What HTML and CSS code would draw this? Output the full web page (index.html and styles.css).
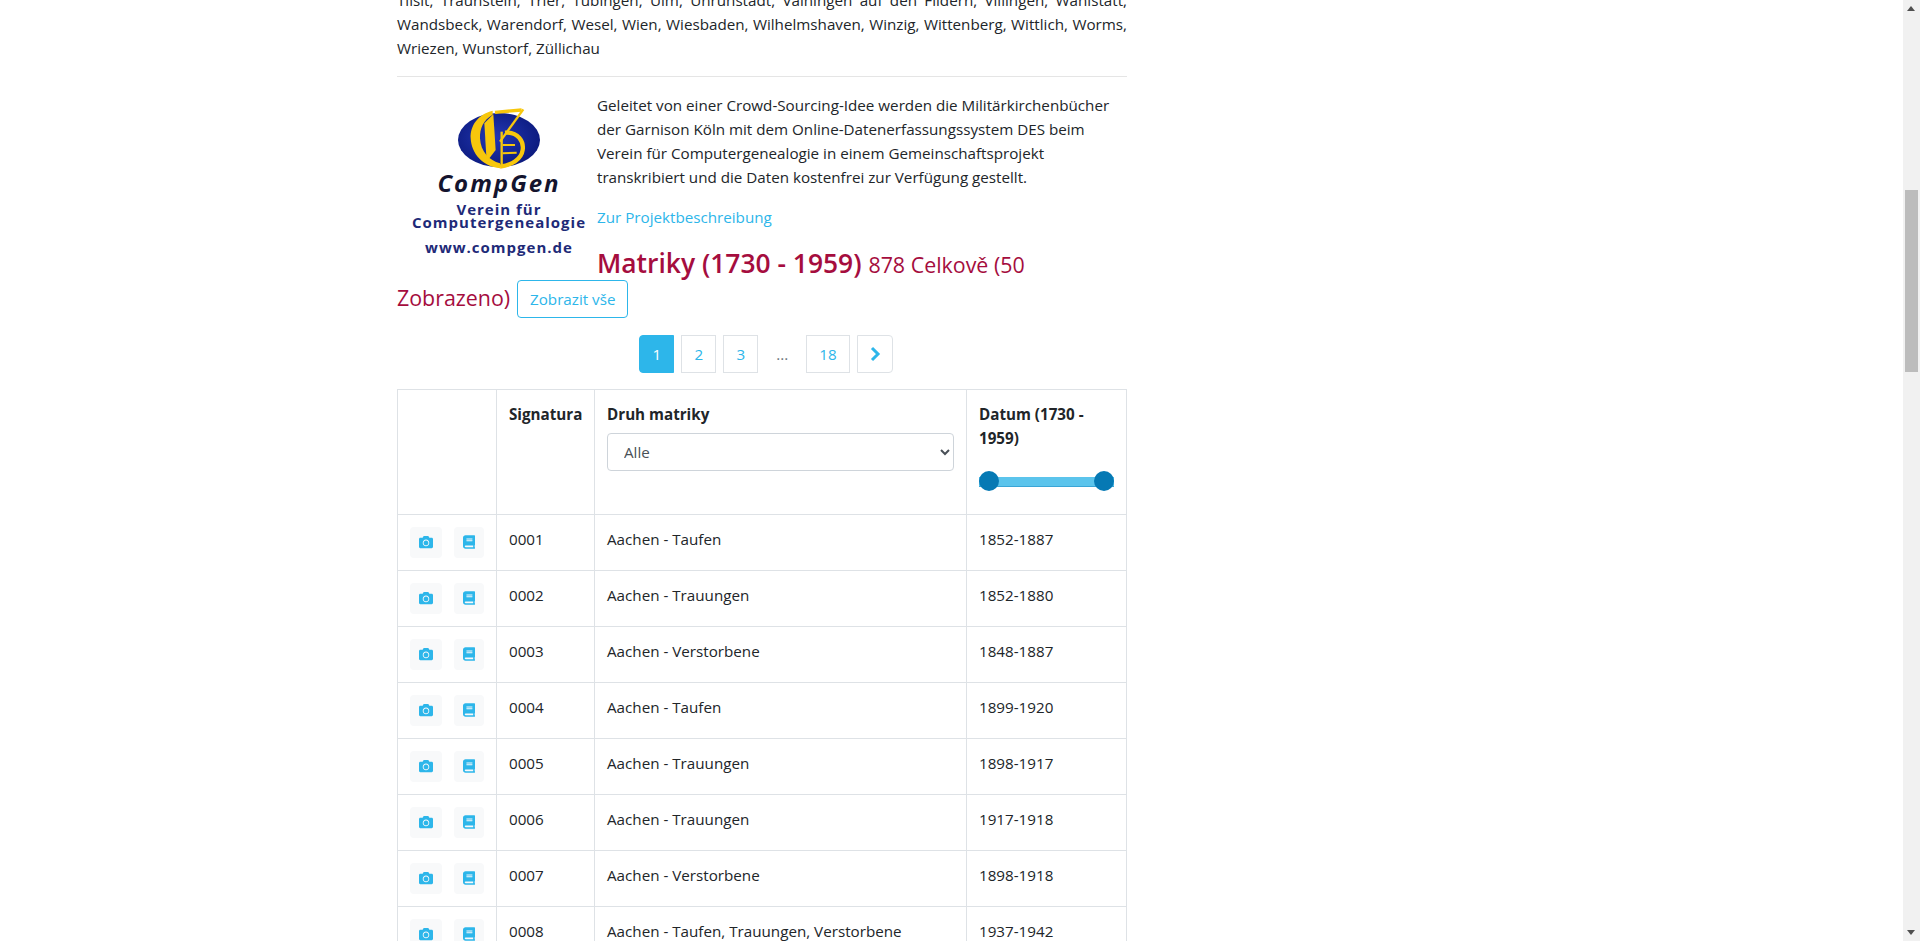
FILE: index.html
```html
<!DOCTYPE html>
<html lang="cs">
  <head>
    <meta charset="UTF-8" />
    <meta name="viewport" content="width=device-width, initial-scale=1.0" />
    <title>Matriky</title>
    <link rel="stylesheet" href="styles.css">
  </head>
  <body>
    <svg class="icon-defs" aria-hidden="true">
      <symbol id="icon-camera" viewBox="0 0 512 512">
        <path d="M512 144v288c0 26.5-21.5 48-48 48H48c-26.5 0-48-21.5-48-48V144c0-26.5 21.5-48 48-48h88l12.3-32.9c7-18.7 24.9-31.1 44.9-31.1h125.5c20 0 37.9 12.4 44.9 31.1L376 96h88c26.5 0 48 21.5 48 48zM376 288c0-66.2-53.8-120-120-120s-120 53.8-120 120 53.8 120 120 120 120-53.8 120-120zm-32 0c0 48.5-39.5 88-88 88s-88-39.5-88-88 39.5-88 88-88 88 39.5 88 88z" />
      </symbol>
      <symbol id="icon-book" viewBox="0 0 448 512">
        <path d="M448 360V24c0-13.3-10.7-24-24-24H96C43 0 0 43 0 96v320c0 53 43 96 96 96h328c13.3 0 24-10.7 24-24v-16c0-7.5-3.5-14.3-8.9-18.7-4.2-15.4-4.2-59.3 0-74.7 5.4-4.3 8.9-11.1 8.9-18.6zM128 134c0-3.3 2.7-6 6-6h212c3.3 0 6 2.7 6 6v20c0 3.3-2.7 6-6 6H134c-3.3 0-6-2.7-6-6v-20zm0 64c0-3.3 2.7-6 6-6h212c3.3 0 6 2.7 6 6v20c0 3.3-2.7 6-6 6H134c-3.3 0-6-2.7-6-6v-20zm253.4 250H96c-17.7 0-32-14.3-32-32 0-17.6 14.4-32 32-32h285.4c-1.9 17.1-1.9 46.9 0 64z" />
      </symbol>
    </svg>

    <div class="page">
      <main class="content">
        <p class="places">
          Tilsit, Traunstein, Trier, Tübingen, Ulm, Unruhstadt, Vaihingen auf den Fildern, Villingen, Wahlstatt,
          Wandsbeck, Warendorf, Wesel, Wien, Wiesbaden, Wilhelmshaven, Winzig, Wittenberg, Wittlich, Worms,
          Wriezen, Wunstorf, Züllichau
        </p>
        <hr class="divider" />

        <svg class="logo" viewBox="0 0 190 172" role="img" aria-label="CompGen">
          <defs>
            <radialGradient id="logo-blue" cx="45%" cy="45%" r="62%">
              <stop offset="0" stop-color="#2338b4" />
              <stop offset="1" stop-color="#0a187a" />
            </radialGradient>
          </defs>
          <ellipse cx="102" cy="47" rx="41" ry="27" fill="url(#logo-blue)" />
          <g transform="translate(53 7) scale(0.3333)">
            <g fill="#f7c70c">
              <path d="M128 32C84 42 60 78 62 115C64 160 98 200 150 205L150 190C118 182 92 155 90 115C89 85 100 60 128 44Z" />
              <path d="M103 70L130 43L137 150L110 185Z" />
            </g>
            <g fill="none" stroke="#f7c70c">
              <path d="M135 37L215 30" stroke-width="10" />
              <path d="M220 28L150 125" stroke-width="7" />
              <path d="M165 98C205 95 222 125 218 150C214 178 185 195 150 200" stroke-width="13" />
              <path d="M155 95L155 200" stroke-width="7" />
              <path d="M158 135L195 135M158 160L200 158" stroke-width="6" />
            </g>
          </g>
          <text class="logo-name" x="102" y="99" text-anchor="middle">CompGen</text>
          <text class="logo-line" x="102" y="122" text-anchor="middle">Verein für</text>
          <text class="logo-line" x="102" y="135" text-anchor="middle">Computergenealogie</text>
          <text class="logo-line" x="102" y="160" text-anchor="middle">www.compgen.de</text>
        </svg>

        <p class="intro">
          Geleitet von einer Crowd-Sourcing-Idee werden die Militärkirchenbücher der Garnison Köln mit dem
          Online-Datenerfassungssystem DES beim Verein für Computergenealogie in einem Gemeinschaftsprojekt
          transkribiert und die Daten kostenfrei zur Verfügung gestellt.
        </p>
        <p class="intro intro-last"><a class="link" href="#">Zur Projektbeschreibung</a></p>

        <h3 class="title">
          Matriky (1730 - 1959) <small class="title-count">878 Celkově (50 Zobrazeno)</small>
          <a class="btn-outline" href="#">Zobrazit vše</a>
        </h3>

        <nav class="pagination">
          <a class="page-link active" href="#">1</a>
          <a class="page-link" href="#">2</a>
          <a class="page-link" href="#">3</a>
          <span class="page-gap">...</span>
          <a class="page-link" href="#">18</a>
          <a class="page-link page-next" href="#">
            <svg viewBox="0 0 12 16" width="12" height="16"><path d="M3 2l6 6-6 6" fill="none" stroke="currentColor" stroke-width="3" /></svg>
          </a>
        </nav>

        <table class="records">
          <thead>
            <tr>
              <th class="col-actions"></th>
              <th class="col-sign">Signatura</th>
              <th class="col-type">
                Druh matriky
                <select class="type-select"><option>Alle</option></select>
              </th>
              <th class="col-date">
                Datum (1730 - 1959)
                <div class="range">
                  <span class="range-handle"></span>
                  <span class="range-handle"></span>
                </div>
              </th>
            </tr>
          </thead>
          <tbody>
            <tr>
              <td><div class="actions"><a class="icon-btn btn-camera" href="#"><svg class="icon-camera"><use href="#icon-camera" /></svg></a><a class="icon-btn" href="#"><svg class="icon-book"><use href="#icon-book" /></svg></a></div></td>
              <td>0001</td><td>Aachen - Taufen</td><td>1852-1887</td>
            </tr>
            <tr>
              <td><div class="actions"><a class="icon-btn btn-camera" href="#"><svg class="icon-camera"><use href="#icon-camera" /></svg></a><a class="icon-btn" href="#"><svg class="icon-book"><use href="#icon-book" /></svg></a></div></td>
              <td>0002</td><td>Aachen - Trauungen</td><td>1852-1880</td>
            </tr>
            <tr>
              <td><div class="actions"><a class="icon-btn btn-camera" href="#"><svg class="icon-camera"><use href="#icon-camera" /></svg></a><a class="icon-btn" href="#"><svg class="icon-book"><use href="#icon-book" /></svg></a></div></td>
              <td>0003</td><td>Aachen - Verstorbene</td><td>1848-1887</td>
            </tr>
            <tr>
              <td><div class="actions"><a class="icon-btn btn-camera" href="#"><svg class="icon-camera"><use href="#icon-camera" /></svg></a><a class="icon-btn" href="#"><svg class="icon-book"><use href="#icon-book" /></svg></a></div></td>
              <td>0004</td><td>Aachen - Taufen</td><td>1899-1920</td>
            </tr>
            <tr>
              <td><div class="actions"><a class="icon-btn btn-camera" href="#"><svg class="icon-camera"><use href="#icon-camera" /></svg></a><a class="icon-btn" href="#"><svg class="icon-book"><use href="#icon-book" /></svg></a></div></td>
              <td>0005</td><td>Aachen - Trauungen</td><td>1898-1917</td>
            </tr>
            <tr>
              <td><div class="actions"><a class="icon-btn btn-camera" href="#"><svg class="icon-camera"><use href="#icon-camera" /></svg></a><a class="icon-btn" href="#"><svg class="icon-book"><use href="#icon-book" /></svg></a></div></td>
              <td>0006</td><td>Aachen - Trauungen</td><td>1917-1918</td>
            </tr>
            <tr>
              <td><div class="actions"><a class="icon-btn btn-camera" href="#"><svg class="icon-camera"><use href="#icon-camera" /></svg></a><a class="icon-btn" href="#"><svg class="icon-book"><use href="#icon-book" /></svg></a></div></td>
              <td>0007</td><td>Aachen - Verstorbene</td><td>1898-1918</td>
            </tr>
            <tr>
              <td><div class="actions"><a class="icon-btn btn-camera" href="#"><svg class="icon-camera"><use href="#icon-camera" /></svg></a><a class="icon-btn" href="#"><svg class="icon-book"><use href="#icon-book" /></svg></a></div></td>
              <td>0008</td><td>Aachen - Taufen, Trauungen, Verstorbene</td><td>1937-1942</td>
            </tr>
          </tbody>
        </table>
      </main>

      <div class="scrollbar">
        <span class="scroll-arrow scroll-up"></span>
        <div class="scroll-track"><div class="scroll-thumb"></div></div>
        <span class="scroll-arrow scroll-down"></span>
      </div>
    </div>
  </body>
</html>
```

FILE: styles.css
```css
* {
  box-sizing: border-box;
}
html,
body {
  margin: 0;
  height: 100%;
  overflow: hidden;
}
body {
  background-color: #fff;
  color: #212529;
  font-family: "Open Sans", sans-serif;
  font-size: 15.2px;
  line-height: 24px;
}
.icon-defs {
  display: none;
}
.page {
  display: flex;
  height: 100vh;
  overflow: hidden;
}
.content {
  flex: none;
  width: 730px;
  margin-left: 397px;
  margin-right: 776px;
  margin-top: -12px;
}
.places {
  margin: 0 0 16px;
  text-align: justify;
}
.divider {
  margin: 0 0 16px;
  border: 0;
  border-top: 1px solid rgba(0, 0, 0, 0.1);
}
.logo {
  float: left;
  width: 190px;
  height: 172px;
  margin-right: 10px;
}
.logo-name {
  font-family: "Open Sans", sans-serif;
  font-size: 24px;
  font-weight: 700;
  font-style: italic;
  letter-spacing: 2px;
  fill: #14142e;
}
.logo-line {
  font-family: "Open Sans", sans-serif;
  font-size: 15px;
  font-weight: 700;
  letter-spacing: 1px;
  fill: #1e2a78;
}
.intro {
  margin: 0 0 16px;
}
.intro-last {
  margin-bottom: 19px;
}
.link {
  color: #2db6ea;
  text-decoration: none;
}
.title {
  margin: 0 0 17px;
  color: #a50d3e;
  font-size: 26.4px;
  font-weight: 600;
  line-height: 1.2;
}
.title-count {
  font-size: 21.4px;
  font-weight: 400;
}
.btn-outline {
  display: inline-block;
  vertical-align: middle;
  height: 38px;
  padding: 6px 12px;
  border: 1px solid #2db6ea;
  border-radius: 4px;
  color: #2db6ea;
  font-size: 15.2px;
  font-weight: 400;
  line-height: 24px;
  text-decoration: none;
}
.pagination {
  display: flex;
  justify-content: center;
  gap: 7px;
  margin-bottom: 16px;
  padding-left: 8px;
}
.page-link {
  display: flex;
  align-items: center;
  justify-content: center;
  height: 38px;
  min-width: 35px;
  padding: 0 12px;
  border: 1px solid #dee2e6;
  color: #2db6ea;
  text-decoration: none;
}
.page-link.active {
  border-color: #2db6ea;
  border-radius: 4px 0 0 4px;
  background-color: #2db6ea;
  color: #fff;
}
.page-next {
  width: 36px;
  padding: 0;
  border-radius: 0 4px 4px 0;
}
.page-gap {
  display: flex;
  align-items: center;
  justify-content: center;
  width: 34px;
  color: #6c757d;
}
.records {
  width: 729px;
  table-layout: fixed;
  border-collapse: collapse;
}
.records th,
.records td {
  padding: 12px;
  border: 1px solid #dee2e6;
  vertical-align: top;
  text-align: left;
}
.records th {
  font-weight: 700;
  color: #212529;
}
.col-actions {
  width: 99px;
}
.col-sign {
  width: 98px;
}
.col-type {
  width: 372px;
}
.col-date {
  width: 160px;
}
.type-select {
  display: block;
  width: 100%;
  height: 38px;
  margin-top: 7px;
  padding: 6px 12px;
  border: 1px solid #ced4da;
  border-radius: 4px;
  background-color: #fff;
  color: #495057;
  font-family: "Open Sans", sans-serif;
  font-size: 15.2px;
}
.range {
  display: flex;
  justify-content: space-between;
  align-items: center;
  height: 10px;
  margin-top: 27px;
  margin-bottom: 15px;
  background-color: #5bc4ec;
  border-bottom: 1px solid #3aa5d6;
}
.range-handle {
  flex: none;
  width: 20px;
  height: 20px;
  border-radius: 50%;
  background-color: #0679b4;
}
.actions {
  display: flex;
  gap: 12px;
}
.icon-btn {
  display: flex;
  align-items: center;
  justify-content: center;
  width: 30px;
  height: 31px;
  border-radius: 4px;
  background-color: #f8f9fa;
  color: #2db6ea;
}
.btn-camera {
  width: 32px;
}
.icon-camera {
  width: 14px;
  height: 14px;
  fill: currentColor;
}
.icon-book {
  width: 12px;
  height: 14px;
  fill: currentColor;
}
.scrollbar {
  display: flex;
  flex-direction: column;
  flex: none;
  width: 17px;
  background-color: #f1f1f1;
}
.scroll-arrow {
  display: block;
  flex: none;
  height: 17px;
  position: relative;
}
.scroll-arrow::after {
  content: "";
  position: absolute;
  left: 4px;
  border-left: 4px solid transparent;
  border-right: 4px solid transparent;
}
.scroll-up::after {
  top: 6px;
  border-bottom: 5px solid #505050;
}
.scroll-down::after {
  bottom: 6px;
  border-top: 5px solid #505050;
}
.scroll-track {
  flex: 1;
  padding-top: 173px;
}
.scroll-thumb {
  width: 13px;
  height: 182px;
  margin-left: 2px;
  background-color: #bcbcbc;
}
```
